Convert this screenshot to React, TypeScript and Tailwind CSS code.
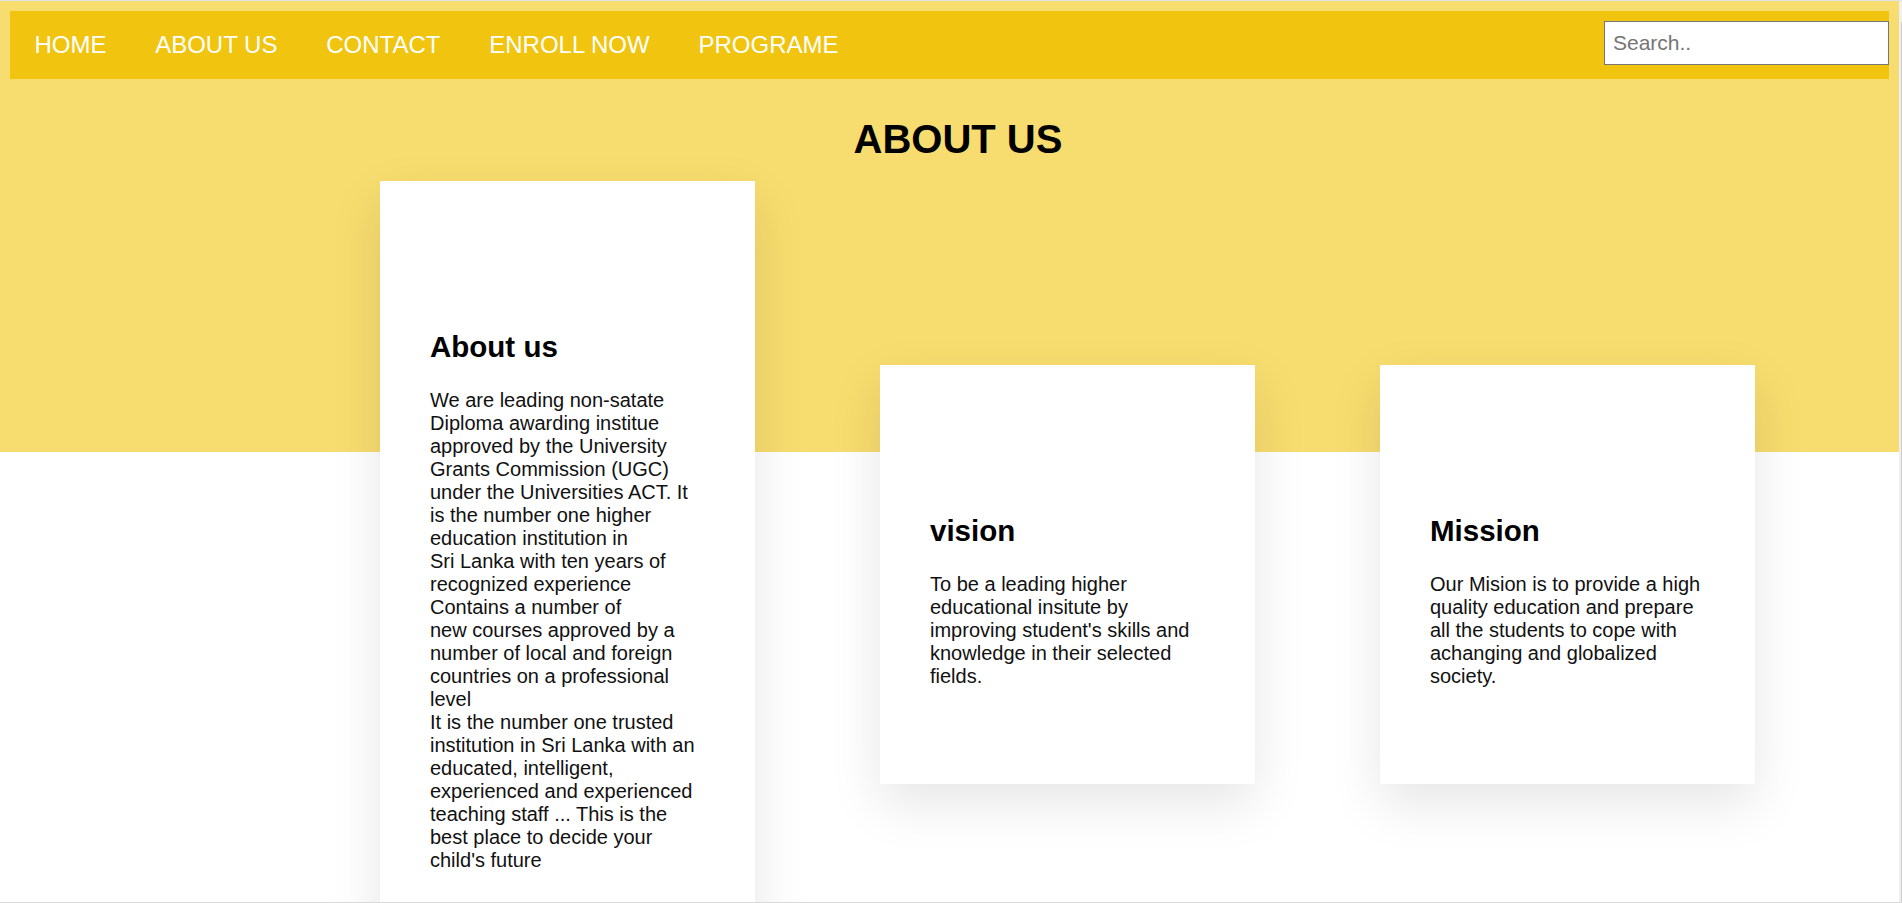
import React from "react";

const font = { fontFamily: '"Liberation Sans", Arial, sans-serif' };

function Card({
  title,
  children,
  className = "",
}: {
  title: string;
  children: React.ReactNode;
  className?: string;
}) {
  return (
    <div
      className={`w-[375px] shrink-0 bg-white px-[50px] pt-[149px] pb-[96px] shadow-[0_20px_50px_rgba(0,0,0,0.1)] ${className}`}
    >
      <h2 className="text-[29.5px] font-bold leading-[34px] text-black">{title}</h2>
      <p className="mt-[25px] text-[20px] leading-[23px] text-[#111]">{children}</p>
    </div>
  );
}

export default function App() {
  const links = ["HOME", "ABOUT US", "CONTACT", "ENROLL NOW", "PROGRAME"];
  return (
    <div className="flex h-[903px] w-full flex-col overflow-hidden bg-white" style={font}>
      <div className="h-px w-full shrink-0 bg-[#dfe3e8]" />
      <div className="flex min-h-0 flex-1">
        <div className="min-w-0 flex-1 overflow-hidden bg-[linear-gradient(to_bottom,#f7dc6f_451px,#ffffff_451px)]">
          <nav className="mx-[10px] mt-[10px] flex h-[68px] justify-between bg-[#f1c40f]">
            <div className="flex">
              {links.map((l) => (
                <a
                  key={l}
                  href="#"
                  className="block px-[24.4px] pt-[19.5px] text-[24px] leading-[28px] text-white"
                >
                  {l}
                </a>
              ))}
            </div>
            <input
              type="text"
              placeholder="Search.."
              className="mt-[10px] h-[44px] w-[285px] border border-[#767676] bg-white px-[8px] text-[21px] text-black outline-none placeholder:text-[#757575]"
            />
          </nav>
          <h1 className="mt-[37px] pl-[17px] text-center text-[40px] font-bold leading-[46px] text-black">
            ABOUT US
          </h1>
          <div className="mt-[19px] flex items-start gap-[125px] pl-[380px]">
            <Card title="About us">
              We are leading non-satate Diploma awarding institue approved by the University Grants
              Commission (UGC) under the Universities ACT. It is the number one higher education
              institution in
              <br />
              Sri Lanka with ten years of recognized experience
              <br />
              Contains a number of
              <br />
              new courses approved by a number of local and foreign countries on a professional level
              <br />
              It is the number one trusted institution in Sri Lanka with an educated, intelligent,
              experienced and experienced teaching staff ... This is the best place to decide your
              child's future
            </Card>
            <Card title="vision" className="mt-[184px]">
              To be a leading higher educational insitute by improving student's skills and knowledge
              in their selected fields.
            </Card>
            <Card title="Mission" className="mt-[184px]">
              Our Mision is to provide a high quality education and prepare all the students to cope
              with achanging and globalized society.
            </Card>
          </div>
        </div>
        <div className="flex w-[3px] shrink-0 justify-end bg-[#efefef] pt-[21px]">
          <div className="h-full w-px bg-[#cdcdcd]" />
        </div>
      </div>
      <div className="h-px w-full shrink-0 bg-[#dadada]" />
    </div>
  );
}
